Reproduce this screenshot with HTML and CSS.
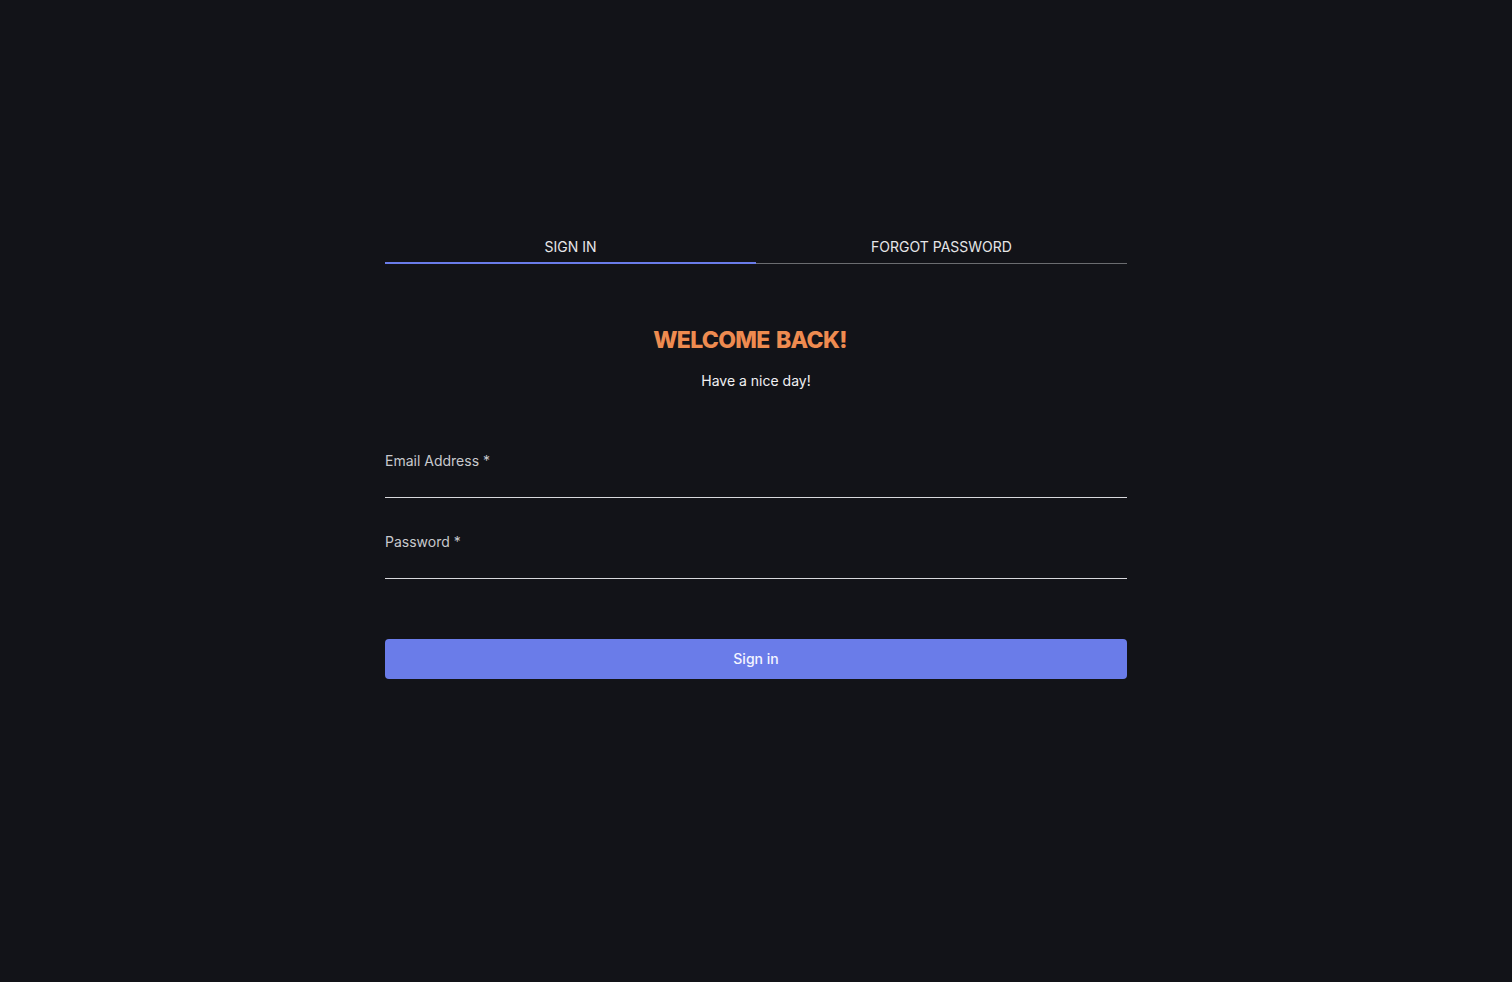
FILE: index.html
```html
<!DOCTYPE html>
<html lang="en">
<head>
<meta charset="utf-8">
<title>Sign in</title>
<link rel="stylesheet" href="styles.css">
</head>
<body>
<main class="page">
  <div class="card">
    <nav class="tabs">
      <div class="tab tab-active">SIGN IN</div>
      <div class="tab">FORGOT PASSWORD</div>
    </nav>
    <h1 class="title">WELCOME BACK!</h1>
    <p class="subtitle">Have a nice day!</p>
    <form class="form">
      <label class="field">
        <span class="label">Email Address *</span>
        <input class="input" type="email">
      </label>
      <label class="field field-second">
        <span class="label">Password *</span>
        <input class="input" type="password">
      </label>
      <button class="submit" type="button">Sign in</button>
    </form>
  </div>
</main>
</body>
</html>
```
FILE: styles.css
```css
* { box-sizing: border-box; }
html, body {
  margin: 0;
  padding: 0;
  background: #121318;
  height: 100%;
}
body {
  font-family: Inter, "Noto Sans", sans-serif;
  color: #e8e8ea;
}
.page {
  display: flex;
  justify-content: center;
  padding-top: 224px;
}
.card {
  width: 742px;
  display: flex;
  flex-direction: column;
}
.tabs {
  display: flex;
  box-shadow: inset 0 -1px 0 #6b6c70;
}
.tab {
  flex: 1;
  text-align: center;
  font-size: 14px;
  line-height: 20px;
  padding: 13px 0 5px;
  border-bottom: 2px solid transparent;
  color: #e6e6e8;
}
.tab-active {
  border-bottom-color: #6a7ce9;
}
.title {
  margin: 62px 0 0;
  text-align: center;
  font-size: 23px;
  line-height: 29px;
  font-weight: 800;
  color: #ee8b50;
  letter-spacing: -0.7px;
  word-spacing: 2px;
  padding-right: 12px;
}
.subtitle {
  margin: 16px 0 0;
  text-align: center;
  font-size: 14px;
  line-height: 20px;
  color: #f0f0f2;
}
.form {
  display: flex;
  flex-direction: column;
  margin-top: 60px;
}
.field {
  display: flex;
  flex-direction: column;
}
.field-second {
  margin-top: 34px;
}
.label {
  font-size: 14px;
  line-height: 20px;
  color: #c8c9cd;
}
.input {
  height: 27px;
  background: transparent;
  border: none;
  border-bottom: 1px solid #d8d8dc;
  outline: none;
  color: #e8e8ea;
  font: inherit;
  padding: 0;
}
.submit {
  margin-top: 60px;
  height: 40px;
  border: none;
  border-radius: 4px;
  background: #6a7ce9;
  color: #f4f5ff;
  font-family: inherit;
  font-size: 14px;
  font-weight: 500;
  line-height: 20px;
  padding: 0;
}
```
